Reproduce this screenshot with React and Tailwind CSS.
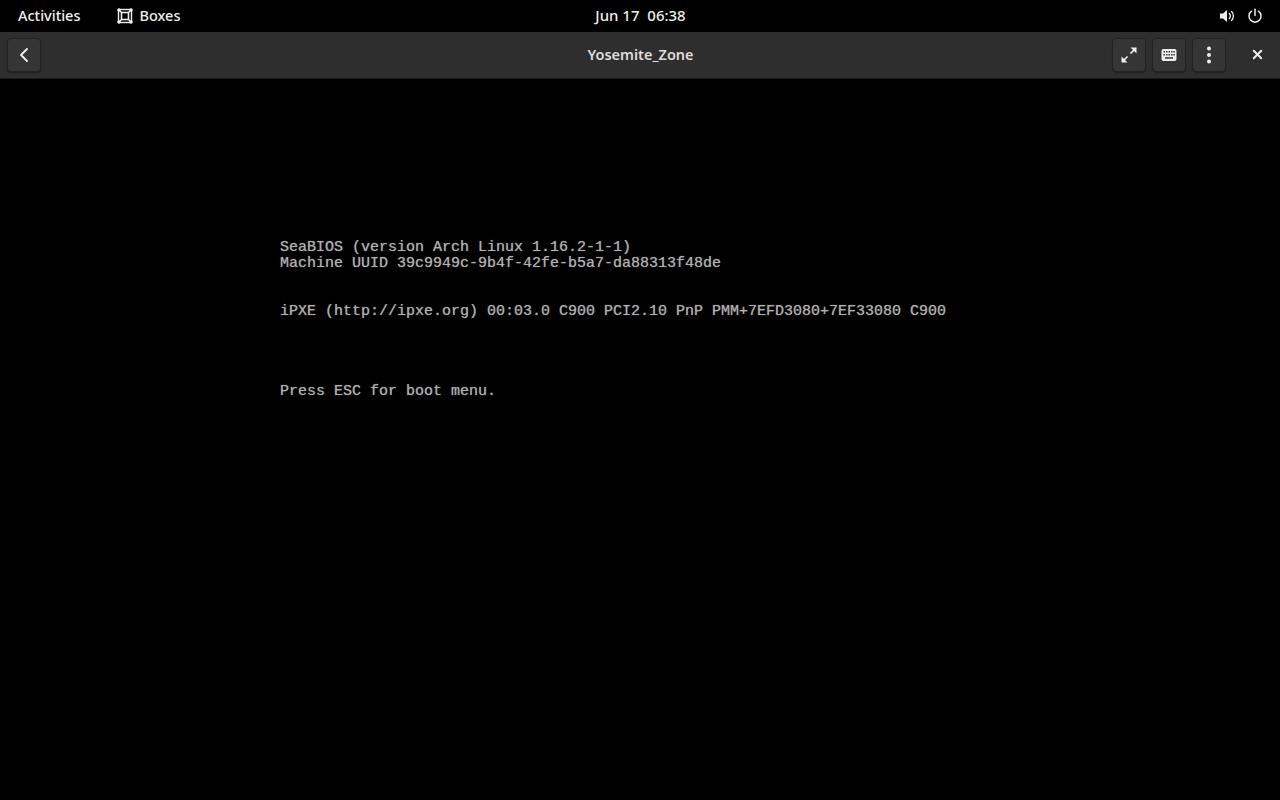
import { ChevronLeft, X, EllipsisVertical } from "lucide-react";

const consoleLines = [
    "SeaBIOS (version Arch Linux 1.16.2-1-1)",
    "Machine UUID 39c9949c-9b4f-42fe-b5a7-da88313f48de",
    "",
    "",
    "iPXE (http://ipxe.org) 00:03.0 C900 PCI2.10 PnP PMM+7EFD3080+7EF33080 C900",
    "",
    "",
    "",
    "",
    "Press ESC for boot menu.",
];

const BoxesIcon = () => (
    <svg width="16" height="16" viewBox="0 0 16 16" fill="none" stroke="#eeeeec" strokeWidth="1.4">
        <rect x="1.5" y="1.5" width="13" height="13" />
        <rect x="4.5" y="4.5" width="7" height="7" strokeWidth="1.6" />
        <path d="M2 2l2.5 2.5M14 2l-2.5 2.5M2 14l2.5-2.5M14 14l-2.5-2.5" />
        <circle cx="2" cy="2" r="1.7" fill="#eeeeec" stroke="none" />
        <circle cx="14" cy="2" r="1.7" fill="#eeeeec" stroke="none" />
        <circle cx="2" cy="14" r="1.7" fill="#eeeeec" stroke="none" />
        <circle cx="14" cy="14" r="1.7" fill="#eeeeec" stroke="none" />
    </svg>
);

const VolumeIcon = () => (
    <svg width="17" height="16" viewBox="0 0 17 16" fill="none">
        <path d="M1 5.5h3L8 2v12l-4-3.5H1z" fill="#eeeeec" />
        <path d="M10.3 5.5a3.5 3.5 0 0 1 0 5" stroke="#eeeeec" strokeWidth="1.3" strokeLinecap="round" />
        <path d="M12.6 3.5a6.5 6.5 0 0 1 0 9" stroke="#eeeeec" strokeWidth="1.3" strokeLinecap="round" />
    </svg>
);

const PowerIcon = () => (
    <svg width="16" height="16" viewBox="0 0 16 16" fill="none" stroke="#eeeeec" strokeWidth="1.5" strokeLinecap="round">
        <path d="M8 1.2v6.3" />
        <path d="M4.6 3.2a6 6 0 1 0 6.8 0" />
    </svg>
);

const FullscreenIcon = () => (
    <svg width="16" height="16" viewBox="0 0 16 16" fill="none" stroke="#eeeeec" strokeWidth="1.7">
        <path d="M9.5 6.5L14 2" />
        <path d="M9.5 0.5h6v6z" fill="#eeeeec" stroke="none" />
        <path d="M6.5 9.5L2 14" />
        <path d="M0.5 9.5v6h6z" fill="#eeeeec" stroke="none" />
    </svg>
);

const KeyboardIcon = () => (
    <svg width="16" height="16" viewBox="0 0 16 16">
        <rect x="0.5" y="2" width="15" height="12" rx="2" fill="#eeeeec" />
        <g fill="#353535">
            <rect x="2.5" y="4" width="1.5" height="1.5" />
            <rect x="5" y="4" width="1.5" height="1.5" />
            <rect x="7.5" y="4" width="1.5" height="1.5" />
            <rect x="10" y="4" width="1.5" height="1.5" />
            <rect x="12.3" y="4" width="1.5" height="1.5" />
            <rect x="2.5" y="7" width="1.5" height="1.5" />
            <rect x="5" y="7" width="1.5" height="1.5" />
            <rect x="7.5" y="7" width="1.5" height="1.5" />
            <rect x="10" y="7" width="1.5" height="1.5" />
            <rect x="12.3" y="7" width="1.5" height="1.5" />
            <rect x="4" y="10.2" width="8" height="1.5" />
        </g>
    </svg>
);

const HeaderButton = ({ children }) => (
    <button className="flex h-[34px] w-[34px] items-center justify-center rounded-[4px] border border-[#222222] bg-[#353535] shadow-[0_1px_1px_rgba(0,0,0,0.35)]">
        {children}
    </button>
);

const App = () => {
    return (
        <div className="flex h-[800px] w-[1280px] flex-col overflow-hidden bg-black font-['Noto_Sans',sans-serif] text-[#eeeeec]">
            <div className="grid h-8 grid-cols-3 items-center bg-black pl-[18px] pr-[17px] text-[14.5px] font-medium">
                <div className="flex items-center">
                    <span className="pb-px">Activities</span>
                    <span className="ml-[37px] flex items-center gap-[6px]">
                        <BoxesIcon />
                        <span className="pb-px">Boxes</span>
                    </span>
                </div>
                <div className="pb-px text-center text-[15px]">
                    <span className="whitespace-pre">Jun 17  06:38</span>
                </div>
                <div className="flex items-center justify-end gap-[11px]">
                    <VolumeIcon />
                    <PowerIcon />
                </div>
            </div>

            <div className="flex h-[47px] items-center border-b border-[#1a1a1a] bg-[#2e2e2e] pb-px pl-[7px] pr-[6px]">
                <div className="flex flex-1 items-center">
                    <HeaderButton>
                        <ChevronLeft size={24} strokeWidth={1.8} />
                    </HeaderButton>
                </div>
                <span className="text-[14.5px] font-semibold text-[#dddddd]">Yosemite_Zone</span>
                <div className="flex flex-1 items-center justify-end gap-[6px]">
                    <HeaderButton>
                        <FullscreenIcon />
                    </HeaderButton>
                    <HeaderButton>
                        <KeyboardIcon />
                    </HeaderButton>
                    <HeaderButton>
                        <EllipsisVertical size={22} strokeWidth={2.4} />
                    </HeaderButton>
                    <button className="ml-[8px] flex h-[34px] w-[34px] items-center justify-center">
                        <X size={15} strokeWidth={3} />
                    </button>
                </div>
            </div>

            <main className="flex-1 bg-black pl-[280px] pt-[161px] font-['Liberation_Mono',monospace] text-[15px] leading-4 text-[#b0b0b0] [text-shadow:0_0_1px_#808080]">
                {consoleLines.map((line, i) => (
                    <div key={i} className="h-4 whitespace-pre">{line}</div>
                ))}
            </main>
        </div>
    );
};

export default App;
